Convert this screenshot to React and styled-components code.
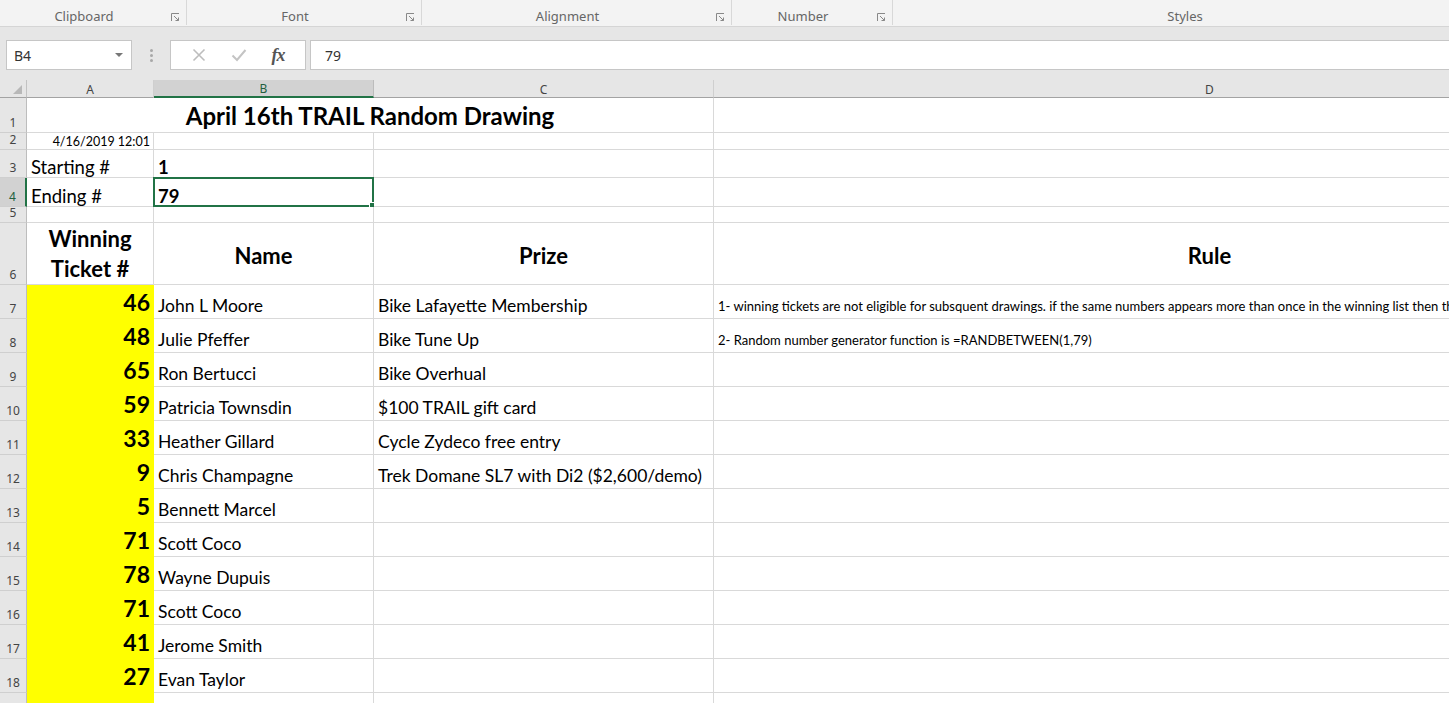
import React from 'react';
import styled, { createGlobalStyle } from 'styled-components';

const GlobalStyle = createGlobalStyle`
  html, body {
    margin: 0;
    padding: 0;
    background: #fff;
  }
  * {
    box-sizing: border-box;
  }
`;

const GRID = '#d9d9d9';
const GREEN = '#217346';

const Window = styled.div`
  width: 1449px;
  height: 703px;
  overflow: hidden;
  background: #fff;
  font-family: Lato, 'Open Sans', sans-serif;
`;

const Ribbon = styled.div`
  display: flex;
  height: 27px;
  background: #f3f3f3;
  border-bottom: 1px solid #d5d5d5;
  font-family: 'Noto Sans', 'Open Sans', sans-serif;
  font-size: 13px;
  color: #666;
`;

const Group = styled.div`
  position: relative;
  flex: 0 0 ${props => props.$w}px;
  display: flex;
  align-items: flex-end;
  justify-content: center;
  padding-right: ${props => (props.$launcher ? 18 : 0)}px;
  border-right: ${props => (props.$last ? 'none' : '1px solid #d8d8d8')};
  height: 25px;
`;

const Launcher = styled.svg`
  position: absolute;
  right: 6px;
  bottom: 3px;
`;

const DialogLauncher = () => (
  <Launcher width="9" height="9" viewBox="0 0 9 9">
    <path d="M0.5 8V0.5H8" fill="none" stroke="#888" strokeWidth="1" />
    <path d="M3 3L7.5 7.5M7.5 4.5V7.5H4.5" fill="none" stroke="#888" strokeWidth="1" />
  </Launcher>
);

const Band = styled.div`
  background: #e6e6e6;
  height: 53px;
  padding-top: 13px;
`;

const FormulaBar = styled.div`
  display: flex;
  align-items: stretch;
  height: 30px;
  padding-left: 6px;
`;

const NameBox = styled.div`
  width: 126px;
  background: #fff;
  border: 1px solid #c6c6c6;
  display: flex;
  align-items: center;
  justify-content: space-between;
  padding: 0 8px 0 7px;
  font-family: 'Noto Sans', sans-serif;
  font-size: 14px;
  color: #333;
`;

const Caret = styled.span`
  width: 0;
  height: 0;
  border-left: 4px solid transparent;
  border-right: 4px solid transparent;
  border-top: 4px solid #777;
`;

const Grip = styled.div`
  width: 38px;
  display: flex;
  flex-direction: column;
  align-items: center;
  justify-content: center;
  gap: 2px;

  span {
    width: 3px;
    height: 3px;
    background: #a8a8a8;
    border-radius: 50%;
  }
`;

const FxBox = styled.div`
  width: 136px;
  background: #fff;
  border: 1px solid #c6c6c6;
  display: flex;
  align-items: center;
  justify-content: space-around;
  padding: 0 8px;
  margin-right: 4px;
`;

const Fx = styled.span`
  font-family: 'Liberation Serif', serif;
  font-style: italic;
  font-weight: 700;
  font-size: 18px;
  color: #555;
  letter-spacing: -1px;
`;

const FormulaInput = styled.div`
  flex: 1;
  background: #fff;
  border: 1px solid #c6c6c6;
  border-right: none;
  display: flex;
  align-items: center;
  padding-left: 14px;
  font-family: 'Noto Sans', sans-serif;
  font-size: 14px;
  color: #333;
`;

const Sheet = styled.div`
  display: grid;
  grid-template-columns: 27px 127px 220px 340px 992px;
  grid-template-rows: 18px 35px 17px 28px 29px 16px 62px repeat(13, 34px);
  background: #fff;
`;

const ColHead = styled.div`
  background: ${props => (props.$selected ? '#d2d2d2' : '#e6e6e6')};
  border-right: 1px solid ${props => (props.$selected ? '#bcbcbc' : '#cfcfcf')};
  border-bottom: ${props => (props.$selected ? `2px solid ${GREEN}` : '1px solid #a3a3a3')};
  display: flex;
  align-items: center;
  justify-content: center;
  padding-top: 1px;
  font-family: 'Noto Sans', sans-serif;
  font-size: 12px;
  color: ${props => (props.$selected ? '#225f3e' : '#444')};
`;

const Corner = styled.div`
  background: #e6e6e6;
  border-right: 1px solid #c2c2c2;
  border-bottom: 1px solid #a3a3a3;
  display: flex;
  align-items: flex-end;
  justify-content: flex-end;
  padding: 0 4px 3px 0;
`;

const RowHead = styled.div`
  background: ${props => (props.$selected ? '#d2d2d2' : '#e6e6e6')};
  border-right: ${props => (props.$selected ? `2px solid ${GREEN}` : '1px solid #bdbdbd')};
  border-bottom: 1px solid #cfcfcf;
  display: flex;
  align-items: flex-end;
  justify-content: center;
  padding-bottom: 1px;
  font-family: 'Noto Sans', sans-serif;
  font-size: 12px;
  color: ${props => (props.$selected ? '#225f3e' : '#444')};
`;

const Cell = styled.div`
  position: relative;
  grid-column: span ${props => props.$span || 1};
  background: ${props => props.$fill || '#fff'};
  border-right: 1px solid ${props => props.$fill || GRID};
  border-bottom: 1px solid ${props => props.$fill || GRID};
  display: flex;
  align-items: ${props => props.$valign || 'flex-end'};
  justify-content: ${props => props.$align || 'flex-start'};
  text-align: ${props => (props.$align === 'center' ? 'center' : 'left')};
  padding: ${props => props.$pt || 0}px ${props => (props.$align === 'flex-end' ? 3 : 4)}px
    ${props => (props.$pb !== undefined ? props.$pb : 2)}px 4px;
  font-size: ${props => props.$size || 17.5}px;
  font-weight: ${props => (props.$bold ? 700 : 400)};
  line-height: ${props => props.$lh || 1.2};
  color: #000;
  white-space: ${props => (props.$wrap ? 'normal' : 'nowrap')};
`;

const Selection = styled.div`
  position: absolute;
  inset: -1px -1px -1px -1px;
  border: 2px solid ${GREEN};
  pointer-events: none;

  &::after {
    content: '';
    position: absolute;
    right: -4px;
    bottom: -4px;
    width: 5px;
    height: 5px;
    background: ${GREEN};
    border: 1px solid #fff;
  }
`;

const winners = [
  [46, 'John L Moore', 'Bike Lafayette Membership'],
  [48, 'Julie Pfeffer', 'Bike Tune Up'],
  [65, 'Ron Bertucci', 'Bike Overhual'],
  [59, 'Patricia Townsdin', '$100 TRAIL gift card'],
  [33, 'Heather Gillard', 'Cycle Zydeco free entry'],
  [9, 'Chris Champagne', 'Trek Domane SL7 with Di2 ($2,600/demo)'],
  [5, 'Bennett Marcel', ''],
  [71, 'Scott Coco', ''],
  [78, 'Wayne Dupuis', ''],
  [71, 'Scott Coco', ''],
  [41, 'Jerome Smith', ''],
  [27, 'Evan Taylor', ''],
];

const rules = [
  '1- winning tickets are not eligible for subsquent drawings.  if the same numbers appears more than once in the winning list then the',
  '2- Random number generator function is =RANDBETWEEN(1,79)',
];

const groups = [
  { label: 'Clipboard', w: 187, launcher: true },
  { label: 'Font', w: 235, launcher: true },
  { label: 'Alignment', w: 310, launcher: true },
  { label: 'Number', w: 161, launcher: true },
  { label: 'Styles', w: 584, last: true },
];

const App = () => (
  <Window>
    <GlobalStyle />
    <Ribbon>
      {groups.map(g => (
        <Group key={g.label} $w={g.w} $launcher={g.launcher} $last={g.last}>
          {g.label}
          {g.launcher && <DialogLauncher />}
        </Group>
      ))}
    </Ribbon>

    <Band>
      <FormulaBar>
        <NameBox>
          B4
          <Caret />
        </NameBox>
        <Grip>
          <span />
          <span />
          <span />
        </Grip>
        <FxBox>
          <svg width="14" height="14" viewBox="0 0 14 14">
            <path d="M1.5 1.5L12.5 12.5M12.5 1.5L1.5 12.5" stroke="#bdbdbd" strokeWidth="1.6" />
          </svg>
          <svg width="16" height="14" viewBox="0 0 16 14">
            <path d="M1.5 7.5L6 12L14.5 2" fill="none" stroke="#c4c4c4" strokeWidth="2" />
          </svg>
          <Fx>fx</Fx>
        </FxBox>
        <FormulaInput>79</FormulaInput>
      </FormulaBar>
    </Band>

    <Sheet>
      <Corner>
        <svg width="9" height="9" viewBox="0 0 9 9">
          <path d="M9 0V9H0Z" fill="#b8b8b8" />
        </svg>
      </Corner>
      <ColHead>A</ColHead>
      <ColHead $selected>B</ColHead>
      <ColHead>C</ColHead>
      <ColHead>D</ColHead>

      <RowHead>1</RowHead>
      <Cell $span={3} $align="center" $size={24} $bold $pb={1}>
        April 16th TRAIL Random Drawing
      </Cell>
      <Cell />

      <RowHead>2</RowHead>
      <Cell $align="flex-end" $size={12.5} $pb={0} $lh={1.1}>4/16/2019 12:01</Cell>
      <Cell />
      <Cell />
      <Cell />

      <RowHead>3</RowHead>
      <Cell $size={18.5} $pb={0} $lh={1.1}>Starting #</Cell>
      <Cell $size={18.5} $bold $pb={0} $lh={1.1}>1</Cell>
      <Cell />
      <Cell />

      <RowHead $selected>4</RowHead>
      <Cell $size={18.5} $pb={0} $lh={1.1}>Ending #</Cell>
      <Cell $size={18.5} $bold $pb={0} $lh={1.1}>
        79
        <Selection />
      </Cell>
      <Cell />
      <Cell />

      <RowHead>5</RowHead>
      <Cell />
      <Cell />
      <Cell />
      <Cell />

      <RowHead>6</RowHead>
      <Cell $align="center" $size={22} $bold $wrap $lh={1.36} $pb={0}>
        Winning Ticket #
      </Cell>
      <Cell $align="center" $valign="center" $size={22} $bold $pt={7}>Name</Cell>
      <Cell $align="center" $valign="center" $size={22} $bold $pt={7}>Prize</Cell>
      <Cell $align="center" $valign="center" $size={22} $bold $pt={7}>Rule</Cell>

      {winners.map(([num, name, prize], i) => (
        <React.Fragment key={i}>
          <RowHead>{i + 7}</RowHead>
          <Cell $fill="#ffff00" $align="flex-end" $size={23} $bold $pb={1}>{num}</Cell>
          <Cell>{name}</Cell>
          <Cell>{prize}</Cell>
          <Cell $size={13} $pb={3}>{rules[i] || ''}</Cell>
        </React.Fragment>
      ))}

      <RowHead />
      <Cell $fill="#ffff00" />
      <Cell />
      <Cell />
      <Cell />
    </Sheet>
  </Window>
);

export default App;
